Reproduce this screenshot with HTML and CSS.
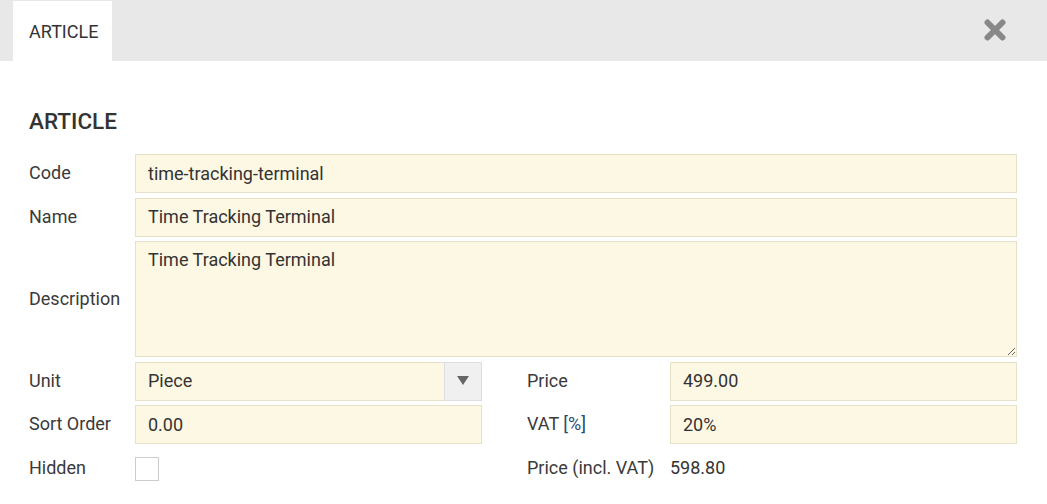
FILE: index.html
```html
<!DOCTYPE html>
<html>
<head>
<meta charset="utf-8">
<link rel="stylesheet" href="styles.css">
</head>
<body>
<div class="topbar">
  <div class="tab">ARTICLE</div>
  <button class="close" aria-label="Close">
    <svg width="22" height="22" viewBox="0 0 22 22"><path d="M3.5 3.5 L18.5 18.5 M18.5 3.5 L3.5 18.5" stroke="#888" stroke-width="6" stroke-linecap="round"/></svg>
  </button>
</div>
<div class="content">
  <h1 class="title">ARTICLE</h1>
  <div class="form">
    <label class="label">Code</label>
    <input class="field span" value="time-tracking-terminal">

    <label class="label">Name</label>
    <input class="field span" value="Time Tracking Terminal">

    <label class="label">Description</label>
    <textarea class="field area span">Time Tracking Terminal</textarea>

    <label class="label">Unit</label>
    <div class="select">
      <span class="select-text">Piece</span>
      <span class="select-btn"><span class="arrow"></span></span>
    </div>
    <span class="spacer"></span>
    <label class="label">Price</label>
    <input class="field" value="499.00">

    <label class="label">Sort Order</label>
    <input class="field" value="0.00">
    <span class="spacer"></span>
    <label class="label">VAT <span class="unit">[%]</span></label>
    <input class="field" value="20%">

    <label class="label">Hidden</label>
    <div class="check-cell"><span class="checkbox"></span></div>
    <span class="spacer"></span>
    <label class="label">Price (incl. VAT)</label>
    <div class="value">598.80</div>
  </div>
</div>
</body>
</html>
```
FILE: styles.css
```css
* { box-sizing: border-box; }
body {
  margin: 0;
  font-family: Roboto, "Liberation Sans", sans-serif;
  color: #333;
  background: #fff;
}
.topbar {
  height: 61px;
  background: #e8e8e8;
  padding: 1px 41px 0 13px;
  display: flex;
  align-items: stretch;
}
.tab {
  background: #fff;
  padding: 0 14px 0 16px;
  display: flex;
  align-items: center;
  font-size: 18px;
  color: #333;
}
.close {
  margin-left: auto;
  background: none;
  border: 0;
  padding: 0;
  display: flex;
  align-items: center;
  cursor: pointer;
}
.close svg { display: block; margin-top: -2px; }
.content {
  padding: 0 30px 0 29px;
}
.title {
  margin: 47px 0 20px;
  font-size: 22.5px;
  line-height: 26px;
  font-weight: 500;
  color: #333;
}
.form {
  display: grid;
  grid-template-columns: 106px 347px 45px 143px 347px;
  grid-template-rows: 39px 39px 116px 39px 39px 39px;
  row-gap: 4.5px;
  align-items: center;
}
.label {
  font-size: 18px;
  color: #3a3a3a;
  white-space: nowrap;
  margin-top: -2px;
}
.unit { color: #2c4a70; }
.field {
  height: 39px;
  width: 100%;
  border: 1px solid #e7e1c9;
  background: #fdf8e4;
  font-family: Roboto, "Liberation Sans", sans-serif;
  font-size: 18px;
  color: #333;
  padding: 0 12px 1px;
  outline: none;
  margin: 0;
}
.span { grid-column: 2 / 6; }
.area {
  height: 116px;
  padding: 7px 12px;
  resize: vertical;
  line-height: 22px;
}
.select {
  height: 39px;
  display: flex;
  border: 1px solid #e7e1c9;
  background: #fdf8e4;
}
.select-text {
  flex: 1;
  display: flex;
  align-items: center;
  padding: 0 12px 1px;
  font-size: 18px;
  color: #333;
}
.select-btn {
  width: 38px;
  margin: -1px -1px -1px 0;
  background: #f0f0f0;
  border: 1px solid #ddd;
  display: flex;
  align-items: center;
  justify-content: center;
}
.arrow {
  width: 0;
  height: 0;
  border-left: 6px solid transparent;
  border-right: 6px solid transparent;
  border-top: 9px solid #666;
  margin-top: -1px;
}
.check-cell { display: flex; align-items: center; }
.checkbox {
  width: 24px;
  height: 24px;
  border: 1px solid #ccc;
  background: #fff;
  display: block;
  margin-top: 1px;
}
.value {
  font-size: 18px;
  color: #333;
  margin-top: -2px;
}
```
